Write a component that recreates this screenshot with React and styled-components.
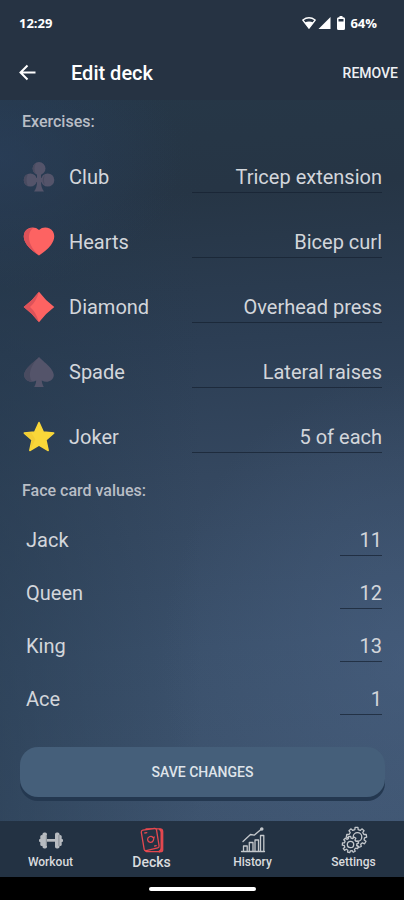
import React from "react";
import styled, { createGlobalStyle } from "styled-components";

const GlobalStyle = createGlobalStyle`
  *, *::before, *::after { box-sizing: border-box; }
  body { margin: 0; background: #000; font-family: Roboto, "Liberation Sans", sans-serif; }
  button, input { font-family: inherit; }
`;

const Screen = styled.div`
  display: flex;
  flex-direction: column;
  min-height: 100vh;
  color: #d3d6db;
`;

const TopArea = styled.header`
  background: #263343;
  color: #fff;
`;

const StatusBar = styled.div`
  display: flex;
  align-items: center;
  justify-content: space-between;
  height: 46px;
  padding: 0 27px 0 19px;
  font-family: "Open Sans", sans-serif;
  font-size: 13px;
  font-weight: 700;
`;

const StatusIcons = styled.div`
  display: flex;
  align-items: center;
  gap: 2px;
`;

const StatusText = styled.span`
  margin-left: 2px;
`;

const Toolbar = styled.div`
  display: flex;
  align-items: center;
  height: 54px;
  padding: 0 6px 0 16px;
`;

const BackButton = styled.button`
  display: flex;
  width: 24px;
  height: 24px;
  padding: 0;
  border: 0;
  background: none;
  color: inherit;
  cursor: pointer;
`;

const Title = styled.h1`
  flex: 1;
  margin: 0 0 0 31px;
  font-size: 20px;
  line-height: 24px;
  font-weight: 500;
`;

const TextButton = styled.button`
  padding: 8px 0;
  border: 0;
  background: none;
  color: #eef0f3;
  font-size: 14px;
  line-height: 16px;
  font-weight: 500;
  cursor: pointer;
`;

const Form = styled.form`
  flex: 1;
  display: flex;
  flex-direction: column;
  padding-bottom: 24px;
  background:
    radial-gradient(ellipse 60% 40% at 100% 78%, rgba(76, 100, 134, 0.5), transparent),
    radial-gradient(ellipse 45% 18% at 0% 8%, rgba(44, 66, 98, 0.5), transparent),
    linear-gradient(90deg, rgba(36, 56, 76, 0.5), transparent 50%),
    linear-gradient(176deg, #263747 0%, #263545 14%, #2c3e54 34%, #34475f 52%, #3a506b 75%, #3e546f 100%);
`;

const Section = styled.section`
  display: flex;
  flex-direction: column;
`;

const SectionTitle = styled.h2`
  margin: 0;
  padding: 0 22px;
  color: #b9bec6;
  font-size: 16px;
  line-height: 44px;
  font-weight: 500;
`;

const Row = styled.div`
  display: flex;
  align-items: center;
  height: ${(p) => (p.$compact ? "53px" : "65px")};
  padding: 0 22px 0 ${(p) => (p.$compact ? "26px" : "23px")};
`;

const SuitIcon = styled.svg`
  flex: none;
  width: 32px;
  height: 32px;
  margin-right: 14px;
`;

const RowLabel = styled.label`
  flex: 1;
  font-size: 20px;
  line-height: 24px;
`;

const Field = styled.input`
  width: ${(p) => (p.$compact ? "42px" : "53%")};
  height: 32px;
  padding: 2px 0 0;
  border: 0;
  border-bottom: 1px solid rgba(22, 33, 48, 0.7);
  border-radius: 0;
  outline: 0;
  background: none;
  color: inherit;
  font-size: 20px;
  line-height: 24px;
  text-align: right;
`;

const SaveButton = styled.button`
  height: 50px;
  margin: 22px 19px 0 20px;
  border: 0;
  border-radius: 18px;
  background: #455f7a;
  box-shadow: 0 4px 0 #243850;
  color: #dfe4ea;
  font-size: 14px;
  font-weight: 500;
  cursor: pointer;
`;

const TabBar = styled.nav`
  display: grid;
  grid-template-columns: repeat(4, 1fr);
  height: 56px;
  background: #233243;
`;

const Tab = styled.a`
  display: flex;
  flex-direction: column;
  align-items: center;
  padding-top: 5px;
  color: #d9dbde;
  font-size: ${(p) => (p.$active ? "14px" : "12px")};
  line-height: 16px;
  font-weight: 500;
  text-decoration: none;
`;

const TabIcon = styled.svg`
  width: 28px;
  height: 28px;
  fill: none;
  stroke: ${(p) => (p.$active ? "#e5484f" : "#c4c8cc")};
  stroke-width: 1.3;
  stroke-linejoin: round;
  stroke-linecap: round;
`;

const HomeBar = styled.footer`
  display: flex;
  align-items: center;
  justify-content: center;
  height: 23px;
  background: #000;
`;

const HomeHandle = styled.div`
  width: 107px;
  height: 4px;
  border-radius: 2px;
  background: #fff;
`;

const DARK = "#54546a";
const DARK_SHADE = "#494b60";

const suitArt = {
  club: (
    <>
      <g fill={DARK}>
        <circle cx="16" cy="7.5" r="6.5" />
        <circle cx="7.3" cy="19" r="6.6" />
        <circle cx="24.7" cy="19" r="6.6" />
        <path d="M14 12h4v5h3v4h-3c0 4 1 7 3 9.500H11c2-2.500 3-5.500 3-9.500h-3v-4h3z" />
      </g>
      <path fill={DARK_SHADE} d="M13 2a6.300 6.300 0 0 0 0 11c-2-3-2-8 0-11zM5 13a6.400 6.400 0 0 0 0 12c-2-4-2-8 0-12zM22 14a6.400 6.400 0 0 0 0 10c-1.500-3-1.500-7 0-10z" />
    </>
  ),
  hearts: (
    <>
      <path fill="#fd6362" d="M16 4C12 0 5 1 2 5.500C-.5 10 1 15 4 19c3 4 8 8 12 10.500C20 27 25 23 28 19c3-4 4.500-9 2-13.500C27 1 20 0 16 4z" />
      <path fill="#dd5259" d="M10 1.900C6.500 2 3.700 3 2 5.500C-.5 10 1 15 4 19c3 4 8 8 12 10.500C9 23 5.500 16 6 10c.3-4 2-6.500 4-8.100z" />
    </>
  ),
  diamond: (
    <>
      <path fill="#fd6362" d="M16 .7Q22.500 9.500 31.300 16Q22.500 22.500 16 31.300Q9.500 22.500 .7 16Q9.500 9.500 16 .7z" />
      <path fill="#dd5259" d="M16 .7Q9.500 9.500 .7 16Q9.500 22.500 16 31.300Q13 21 7 16Q13 11 16 .7z" />
    </>
  ),
  spade: (
    <>
      <path fill={DARK} d="M16 .7C18 4 30.800 12 30.800 19c0 6-7.300 8.500-12 5.500c0 2 .7 4 2 6.500h-9.600c1.300-2.500 2-4.500 2-6.500C8.500 27.500 1.200 25 1.200 19C1.200 12 14 4 16 .7z" />
      <path fill={DARK_SHADE} d="M16 .7C14 4 1.200 12 1.200 19c0 4.500 4 7 8 6.800C4 19 8 9 16 .7z" />
    </>
  ),
  joker: (
    <>
      <path fill="#f9d739" stroke="#f9d739" strokeWidth="1.500" strokeLinejoin="round" d="M16 1.500l4.300 9.500l10.400 1.100l-7.800 6.900l2.300 10.500L16 24.200L6.800 29.500L9.100 19L1.300 12.100L11.700 11z" />
      <path fill="#eac02f" d="M6.800 29.500L9.100 19L1.300 12.100l7-.7l4 7z" opacity=".45" />
    </>
  ),
};

function gearPath(cx, cy, outer, inner, teeth, turn) {
  const step = (Math.PI * 2) / teeth;
  const at = (r, a) => `${(cx + r * Math.cos(a)).toFixed(2)} ${(cy + r * Math.sin(a)).toFixed(2)}`;
  const points = [];
  for (let i = 0; i < teeth; i += 1) {
    const a = turn + i * step;
    points.push(
      at(inner, a - step * 0.3),
      at(outer, a - step * 0.2),
      at(outer, a + step * 0.2),
      at(inner, a + step * 0.3)
    );
  }
  return `M${points.join("L")}Z`;
}

const tabArt = {
  workout: (
    <g fill="#b7bbc0" stroke="none">
      <path d="M9 13h10v3H9z" />
      <rect x="5.500" y="6.500" width="4.500" height="16" rx="1.800" />
      <rect x="18" y="6.500" width="4.500" height="16" rx="1.800" />
      <rect x="3.300" y="9" width="3.500" height="11" rx="1.500" />
      <rect x="21.200" y="9" width="3.500" height="11" rx="1.500" />
      <rect x="2" y="13" width="3" height="3" rx="1" />
      <rect x="23" y="13" width="3" height="3" rx="1" />
      <path fill="#8b9198" d="M8.800 9h1.200v11H8.800zM21.300 9h1.200v11h-1.200zM10 15h8v1h-8z" />
    </g>
  ),
  decks: (
    <>
      <path d="M8 2.800h14q2.700 0 2.700 2.700v18.200q0 2-2 2H9.500q-2 0-2-1.800" />
      <path d="M22 3.500q1.500 1 1.500 3v15.500q0 2.500-2 3.500" strokeWidth="2" />
      <path fill="#233243" d="M4.800 4.200L16.500 2.500q1.700-.2 2 1.300l2.600 16q.2 1.700-1.300 2L8.200 24.700q-1.700.2-2-1.300L3.300 6.300q-.2-1.800 1.500-2.100z" />
      <path d="M15 11.500c-2-2.200-5.800-.6-5.400 2.400c.4 2.900 4.600 3.400 5.700.7c.5-1.300.2-2.300.9-3.600M6.800 7l2-.3M16.700 20l1.500-.3" />
    </>
  ),
  history: (
    <>
      <path d="M2.500 25.500h23M4.500 25.500v-5.500h3.700v5.500M10.300 25.500v-9h3.700v9M16 25.500V14h3.500v11.500M21.500 25.500V9.500h3.300v16" />
      <path d="M4 15.500l7.500-7l3.700.7l7-6" />
      <circle cx="22.800" cy="3" r="1.100" fill="#c4c8cc" />
    </>
  ),
  settings: (
    <>
      <path d={gearPath(16.5, 11.5, 10.2, 8, 9, -1.57)} />
      <circle cx="17.500" cy="11" r="4.300" />
      <path fill="#233243" d={gearPath(10.5, 18.5, 8.2, 6.3, 9, 0.4)} />
      <circle cx="10.500" cy="18.500" r="3.200" />
    </>
  ),
};

const exercises = [
  { id: "club", label: "Club", value: "Tricep extension" },
  { id: "hearts", label: "Hearts", value: "Bicep curl" },
  { id: "diamond", label: "Diamond", value: "Overhead press" },
  { id: "spade", label: "Spade", value: "Lateral raises" },
  { id: "joker", label: "Joker", value: "5 of each" },
];

const faceCards = [
  { id: "jack", label: "Jack", value: "11" },
  { id: "queen", label: "Queen", value: "12" },
  { id: "king", label: "King", value: "13" },
  { id: "ace", label: "Ace", value: "1" },
];

const tabs = [
  { id: "workout", label: "Workout" },
  { id: "decks", label: "Decks", active: true },
  { id: "history", label: "History" },
  { id: "settings", label: "Settings" },
];

export default function App() {
  return (
    <Screen>
      <GlobalStyle />
      <TopArea>
        <StatusBar>
          <span>12:29</span>
          <StatusIcons>
            <svg width="14" height="12" viewBox="0 0 14 12" aria-hidden="true">
              <path fill="none" stroke="#fff" strokeWidth="1.300" strokeLinejoin="round" d="M.8 3Q7-1.500 13.200 3L7 11.200z" />
              <path fill="#fff" d="M2.800 5.400Q7 3.500 11.200 5.400L7 11.500z" />
            </svg>
            <svg width="13" height="12" viewBox="0 0 13 12" aria-hidden="true">
              <path fill="#fff" d="M12.500 0v12H.5z" />
            </svg>
            <svg width="13" height="14" viewBox="0 0 13 14" aria-hidden="true">
              <path fill="#fff" d="M6.500 0h3v1.300h1q1.500 0 1.500 1.500v9.700q0 1.500-1.500 1.500h-5Q4 14 4 12.500V2.800q0-1.500 1.500-1.500h1z" />
              <path fill="#263343" d="M5.500 3h5v2.500h-5z" />
            </svg>
            <StatusText>64%</StatusText>
          </StatusIcons>
        </StatusBar>
        <Toolbar>
          <BackButton type="button" aria-label="Back">
            <svg width="24" height="24" viewBox="0 0 24 24" fill="none" stroke="#fff" strokeWidth="2" aria-hidden="true">
              <path d="M19.500 11.500H5M11.500 4.500l-7 7l7 7" />
            </svg>
          </BackButton>
          <Title>Edit deck</Title>
          <TextButton type="button">REMOVE</TextButton>
        </Toolbar>
      </TopArea>

      <Form onSubmit={(e) => e.preventDefault()}>
        <Section>
          <SectionTitle>Exercises:</SectionTitle>
          {exercises.map((item) => (
            <Row key={item.id}>
              <SuitIcon viewBox="0 0 32 32" aria-hidden="true">{suitArt[item.id]}</SuitIcon>
              <RowLabel htmlFor={item.id}>{item.label}</RowLabel>
              <Field id={item.id} type="text" defaultValue={item.value} />
            </Row>
          ))}
        </Section>
        <Section>
          <SectionTitle>Face card values:</SectionTitle>
          {faceCards.map((item) => (
            <Row key={item.id} $compact>
              <RowLabel htmlFor={item.id}>{item.label}</RowLabel>
              <Field id={item.id} type="text" inputMode="numeric" defaultValue={item.value} $compact />
            </Row>
          ))}
        </Section>
        <SaveButton type="submit">SAVE CHANGES</SaveButton>
      </Form>

      <TabBar>
        {tabs.map((tab) => (
          <Tab key={tab.id} href={`#${tab.id}`} $active={tab.active} aria-current={tab.active ? "page" : undefined}>
            <TabIcon viewBox="0 0 28 28" $active={tab.active} aria-hidden="true">{tabArt[tab.id]}</TabIcon>
            {tab.label}
          </Tab>
        ))}
      </TabBar>
      <HomeBar>
        <HomeHandle />
      </HomeBar>
    </Screen>
  );
}
